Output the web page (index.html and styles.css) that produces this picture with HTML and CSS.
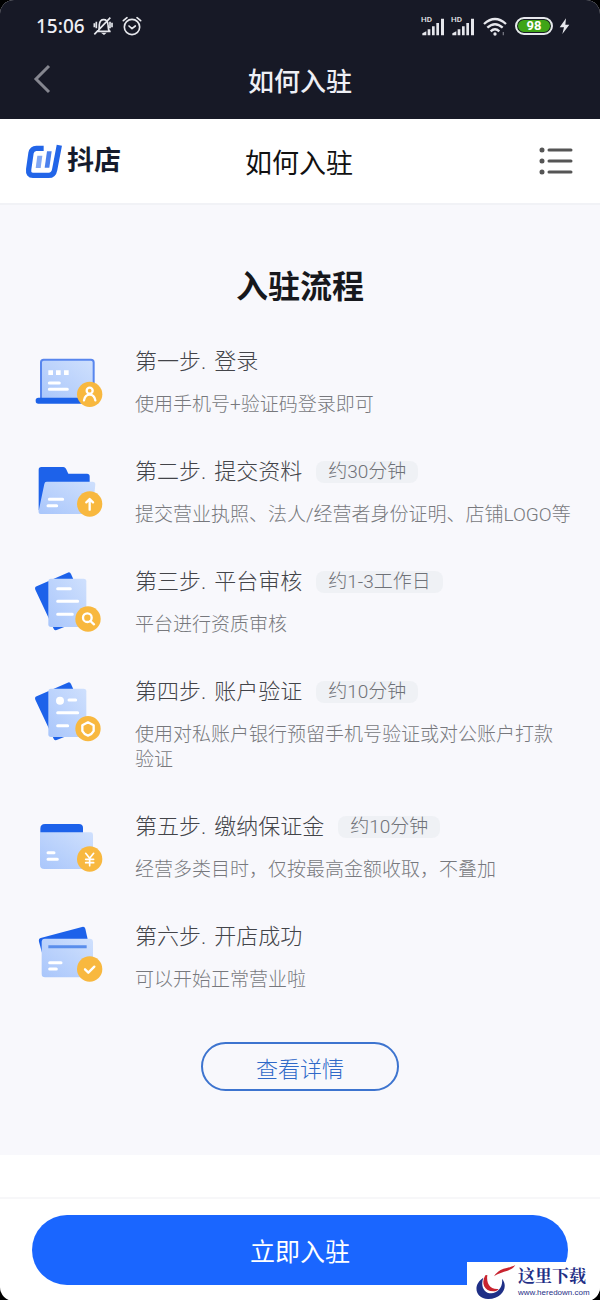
FILE: index.html
```html
<!DOCTYPE html>
<html lang="zh-CN">
<head>
  <meta charset="UTF-8">
  <meta name="viewport" content="width=device-width, initial-scale=1">
  <title>如何入驻</title>
  <link rel="stylesheet" href="styles.css">
</head>
<body>

  <div class="page">
    <header class="app-bar">
      <div class="status">
        <span class="time">15:06</span>
        <svg class="bell" width="20" height="20" viewBox="0 0 60 60" fill="none" stroke="#e6e7ec" stroke-width="5">
          <path d="M11 46h42M16 45c4-6 2-11 3-19 1-10 6-15 13-15s12 5 13 15c1 8 0 13 4 19M4 22v12M57 20v14M10 17v20M51 17v20M4 55 52 5"/>
          <path d="M24 50h17l-8 7z" fill="#e6e7ec" stroke="none"/>
        </svg>
        <svg class="alarm" width="20" height="20" viewBox="0 0 60 60" fill="none" stroke="#e6e7ec" stroke-width="5" stroke-linecap="round" stroke-linejoin="round">
          <circle cx="30" cy="33" r="23"/>
          <path d="M4 14 15 5M56 14 45 5M21 30l9 8 10-8"/>
        </svg>
        <div class="status-right">
          <svg width="24" height="24" viewBox="0 -6 72 72" fill="#e6e7ec">
            <text class="hd" x="0" y="18">HD</text>
            <path d="M4 58v-6l12-6v12zM20 40h8v18h-8zM33 31h8v27h-8zM46 21h8v37h-8zM60 8h9v50h-9z"/>
          </svg>
          <svg class="sim" width="24" height="24" viewBox="0 -6 72 72" fill="#e6e7ec">
            <text class="hd" x="0" y="18">HD</text>
            <path d="M4 58v-6l12-6v12zM20 40h8v18h-8zM33 31h8v27h-8zM46 21h8v37h-8zM60 8h9v50h-9z"/>
          </svg>
          <svg class="wifi" width="24" height="20" viewBox="0 0 72 60" fill="none" stroke="#e6e7ec" stroke-width="7">
            <path d="M3 24q33-30 66 0M13 35q23-21 46 0M23 46q13-12 26 0"/>
            <circle cx="36" cy="54" r="5" fill="#e6e7ec" stroke="none"/>
            <path d="M61 48v10" stroke="#70727d" stroke-width="4"/>
          </svg>
          <span class="battery">98</span>
          <svg width="11" height="18" viewBox="0 0 33 54" fill="#e6e7ec"><path d="M21 4 2 31h13l-5 20 21-28H19z"/></svg>
        </div>
      </div>
      <div class="title-row">
        <button class="back" type="button" aria-label="返回">
          <svg width="18" height="30" viewBox="0 0 18 30" fill="none" stroke="#85868f" stroke-width="3"><path d="M16 2 3 15l13 13"/></svg>
        </button>
        <h1>如何入驻</h1>
      </div>
    </header>

    <nav class="site-bar">
      <a class="logo" href="#">
        <svg width="38" height="36" viewBox="0 0 114 108" fill="none">
          <path d="M56 16H34q-13 0-16 14l-7 49q-2 18 13 18h47q15 0 18-17L103 7" stroke="#2265e8" stroke-width="16"/>
          <path d="M37 38h15l-5 37H32z" fill="#82a8f4"/>
          <path d="M66 25h14l-7 49H59z" fill="#4b80ed"/>
        </svg>
        <span>抖店</span>
      </a>
      <h2>如何入驻</h2>
      <button class="menu" type="button" aria-label="菜单">
        <svg width="34" height="30" viewBox="0 0 34 30" stroke="#555" stroke-width="3" stroke-linecap="round">
          <path d="M10 4h22M10 15h22M10 26h22"/>
          <path d="M3 4h0M3 15h0M3 26h0" stroke-width="5"/>
        </svg>
      </button>
    </nav>

    <main class="process">
      <h2>入驻流程</h2>

      <svg class="defs" width="0" height="0" aria-hidden="true">
        <defs>
          <linearGradient id="sheet" x1="1" y1="0" x2="0" y2="1">
            <stop offset="0" stop-color="#cfe0fd"/>
            <stop offset="1" stop-color="#a9c6fb"/>
          </linearGradient>
        </defs>
      </svg>

      <ol class="steps">
        <li>
          <svg class="icon" viewBox="0 0 210 210">
            <rect x="21" y="38" width="158" height="124" rx="8" fill="url(#sheet)" stroke="#5886ee" stroke-width="6"/>
            <rect x="5" y="152" width="186" height="18" rx="8" fill="#1d62e8"/>
            <path d="M43 70h14v14H43zM66 70h14v14H66zM90 70h14v14H90z" fill="#fff"/>
            <path d="M46 108h30M46 127h54" class="line"/>
            <circle cx="167" cy="142" r="38" class="badge"/>
            <circle cx="167" cy="131" r="9" class="mark"/>
            <path d="M150 160q3-17 17-17t17 17" class="mark"/>
          </svg>
          <div class="text">
            <h3><span class="no">第一步.</span>登录</h3>
            <p>使用手机号+验证码登录即可</p>
          </div>
        </li>
        <li>
          <svg class="icon" viewBox="0 0 210 210">
            <path d="M14 160V38q0-8 8-8h66q5 0 8 5l7 15h56q8 0 8 8v50L30 165z" fill="#1d62ea"/>
            <path d="M38 74h138q8 0 8 8l-8 80q-1 9-9 9H20q-8 0-6-9l17-81q1-7 7-7z" fill="url(#sheet)"/>
            <path d="M46 127h40M42 146h26" class="line"/>
            <circle cx="167" cy="141" r="38" class="badge"/>
            <path d="M167 158v-29M157 136l10-10 10 10" class="mark"/>
          </svg>
          <div class="text">
            <h3><span class="no">第二步.</span>提交资料<span class="tag">约30分钟</span></h3>
            <p class="one-line">提交营业执照、法人/经营者身份证明、店铺LOGO等</p>
          </div>
        </li>
        <li>
          <svg class="icon" viewBox="0 0 210 210">
            <path d="M8 58 101 17q7-3 10 4l54 120q3 7-4 11l-93 37q-6 2-9-4L4 68q-3-7 4-10z" fill="#1d62ea"/>
            <rect x="43" y="35" width="114" height="145" rx="8" fill="url(#sheet)"/>
            <path d="M71 65h38M71 103h60M71 142h44" class="line"/>
            <circle cx="162" cy="156" r="38" class="badge"/>
            <circle cx="160" cy="152" r="13" class="mark"/>
            <path d="m169 162 11 10" class="mark"/>
          </svg>
          <div class="text">
            <h3><span class="no">第三步.</span>平台审核<span class="tag">约1-3工作日</span></h3>
            <p>平台进行资质审核</p>
          </div>
        </li>
        <li>
          <svg class="icon" viewBox="0 0 210 210">
            <path d="M8 58 101 17q7-3 10 4l54 120q3 7-4 11l-93 37q-6 2-9-4L4 68q-3-7 4-10z" fill="#1d62ea"/>
            <rect x="43" y="35" width="114" height="145" rx="8" fill="url(#sheet)"/>
            <circle cx="78" cy="71" r="12" fill="#fff"/>
            <path d="M105 69h20M71 107h60M71 146h30" class="line"/>
            <circle cx="162" cy="155" r="38" class="badge"/>
            <path d="m162 136 17 9v17q-5 10-17 14-12-4-17-14v-17z" class="mark"/>
          </svg>
          <div class="text">
            <h3><span class="no">第四步.</span>账户验证<span class="tag">约10分钟</span></h3>
            <p>使用对私账户银行预留手机号验证或对公账户打款验证</p>
          </div>
        </li>
        <li>
          <svg class="icon" viewBox="0 0 210 210">
            <path d="M19 72V50q0-14 14-14h102q12 0 12 12v24z" fill="#1d62ea"/>
            <path d="M18 61h152q7 0 7 7v90q0 13-13 13H31q-13 0-13-13z" fill="url(#sheet)"/>
            <path d="M42 122h18M42 142h28" class="line"/>
            <circle cx="167" cy="141" r="38" class="badge"/>
            <path d="m155 124 12 15 12-15M167 139v22M155 142h24M155 152h24" class="mark thin"/>
          </svg>
          <div class="text">
            <h3><span class="no">第五步.</span>缴纳保证金<span class="tag">约10分钟</span></h3>
            <p>经营多类目时，仅按最高金额收取，不叠加</p>
          </div>
        </li>
        <li>
          <svg class="icon" viewBox="0 0 210 210">
            <path d="m20 48 124-33q8-2 10 5l8 36-138 36-9-33q-2-9 5-11z" fill="#1d62ea"/>
            <rect x="23" y="50" width="154" height="116" rx="10" fill="url(#sheet)"/>
            <path d="M43 74h115" stroke="#5a8eec" stroke-width="9"/>
            <path d="M47 122h34M47 141h20" class="line"/>
            <circle cx="167" cy="141" r="38" class="badge"/>
            <path d="m153 142 10 10 18-18" class="mark"/>
          </svg>
          <div class="text">
            <h3><span class="no">第六步.</span>开店成功</h3>
            <p>可以开始正常营业啦</p>
          </div>
        </li>
      </ol>

      <button class="detail" type="button">查看详情</button>
    </main>

    <footer class="bottom">
      <button class="join" type="button">立即入驻</button>
    </footer>

    <div class="watermark">
      <svg width="42" height="36" viewBox="0 0 126 108">
        <path d="M28 41C-5 62 3 103 42 105c42 1 63-37 42-61 4 25-13 44-32 44-23 0-33-23-24-47z" fill="#1f2f86"/>
        <path d="M34 34c-14 24-3 48 24 48 7 0 13-3 16-7-25 3-38-17-34-42z" fill="#c8232f"/>
        <path d="M60 37C78 9 99 16 124 3 112 24 86 19 60 37z" fill="#c8232f"/>
      </svg>
      <div>
        <strong>这里下载</strong>
        <span>www.heredown.com</span>
      </div>
    </div>
  </div>

</body>
</html>
```
FILE: styles.css
```css
* {
  box-sizing: border-box;
}
html {
  background-color: #000;
}
body {
  margin: 0;
  font-family: Roboto, "Noto Sans CJK SC", sans-serif;
}
h1, h2, h3, p, ol {
  margin: 0;
  padding: 0;
  font-weight: 400;
}
button {
  padding: 0;
  border: none;
  background: none;
  font-family: inherit;
  cursor: pointer;
}
svg {
  display: block;
  flex-shrink: 0;
}
.page {
  position: relative;
  display: flex;
  flex-direction: column;
  min-height: 100vh;
  background-color: #fff;
  border-radius: 14px;
  overflow: hidden;
}

/* top bars */
.app-bar {
  height: 119px;
  background-color: #171926;
  color: #eeeff5;
}
.status {
  display: flex;
  align-items: center;
  height: 40px;
  padding: 12px 30px 0 36px;
}
.time {
  font-family: "Noto Sans", sans-serif;
  font-size: 19px;
  font-weight: 500;
}
.bell {
  margin-left: 8px;
}
.alarm {
  margin-left: 9px;
}
.status-right {
  display: flex;
  align-items: center;
  margin-left: auto;
}
.hd {
  font-size: 24px;
  font-weight: 500;
}
.sim {
  margin-left: 6px;
}
.wifi {
  margin: 0 8px;
}
.battery {
  width: 38px;
  height: 18px;
  margin-right: 6px;
  border: 2px solid #e6e7ec;
  border-radius: 9px;
  background-color: #3fa417;
  box-shadow: inset 0 0 0 1px #171926;
  color: #fff;
  font-size: 13px;
  font-weight: 700;
  line-height: 14px;
  text-align: center;
}
.title-row,
.site-bar {
  display: grid;
  grid-template-columns: 1fr auto 1fr;
  align-items: center;
}
.title-row {
  height: 80px;
  padding: 0 33px 2px;
}
.back {
  justify-self: start;
}
.title-row h1 {
  font-size: 26px;
  font-weight: 500;
}
.site-bar {
  height: 86px;
  padding: 0 27px 0 25px;
  border-bottom: 2px solid #f1f2f6;
}
.site-bar h2 {
  color: #111;
  font-size: 27px;
}
.logo {
  display: flex;
  align-items: center;
  gap: 4px;
  color: #151b2d;
  font-size: 27px;
  font-weight: 700;
  line-height: 36px;
  text-decoration: none;
}
.menu {
  justify-self: end;
}

/* steps */
.process {
  padding: 60px 32px 64px;
  background-color: #f8f8fc;
  text-align: center;
}
.process h2 {
  color: #17181c;
  font-size: 32px;
  font-weight: 700;
  line-height: 44px;
}
.defs {
  position: absolute;
}
.steps {
  display: flex;
  flex-direction: column;
  gap: 40px;
  margin: 38px 0 50px;
  list-style: none;
  text-align: left;
}
.steps li {
  display: flex;
  gap: 31px;
  padding-left: 2px;
}
.icon {
  width: 70px;
  height: 70px;
}
.line {
  fill: none;
  stroke: #fff;
  stroke-width: 9;
  stroke-linecap: round;
}
.badge {
  fill: #f8b83f;
}
.mark {
  fill: none;
  stroke: #fff;
  stroke-width: 7;
  stroke-linecap: round;
  stroke-linejoin: round;
}
.thin {
  stroke-width: 5;
}
.steps h3 {
  display: flex;
  align-items: center;
  margin-bottom: 15px;
  color: #434449;
  font-size: 22px;
  font-weight: 300;
  line-height: 30px;
}
.no {
  margin-right: 8px;
}
.steps p {
  color: #77787d;
  font-size: 19px;
  font-weight: 300;
  line-height: 25px;
}
.one-line {
  white-space: nowrap;
}
.tag {
  margin-left: 14px;
  padding: 0 12px;
  border-radius: 8px;
  background-color: #eff1f5;
  color: #6f7278;
  font-size: 19px;
  line-height: 22px;
}
.detail {
  width: 198px;
  height: 49px;
  border: 2px solid #3d74cf;
  border-radius: 25px;
  color: #2f69c8;
  font-size: 22px;
  font-weight: 300;
}

/* bottom action */
.bottom {
  margin-top: 42px;
  padding: 16px 32px;
  border-top: 2px solid #f7f7f9;
}
.join {
  width: 100%;
  height: 70px;
  border-radius: 35px;
  background-color: #1a66ff;
  color: #fff;
  font-size: 25px;
}
.watermark {
  position: absolute;
  right: 0;
  bottom: 0;
  display: flex;
  gap: 2px;
  width: 133px;
  height: 39px;
  padding: 2px 0 0 7px;
  background-color: #fff;
  color: #1f2f86;
}
.watermark strong,
.watermark span {
  display: block;
}
.watermark strong {
  font-family: "Noto Serif CJK SC", "Noto Sans CJK SC", serif;
  font-size: 17px;
  line-height: 22px;
}
.watermark span {
  font-family: "Liberation Sans", sans-serif;
  font-size: 8px;
  line-height: 14px;
}
```
